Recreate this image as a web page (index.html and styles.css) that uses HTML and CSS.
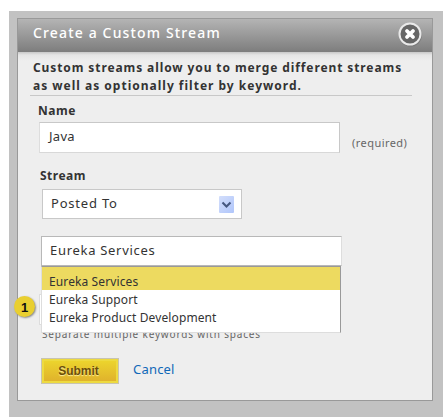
FILE: index.html
```html
<!DOCTYPE html>
<html lang="en">
<head>
<meta charset="utf-8">
<title>Create a Custom Stream</title>
<link rel="stylesheet" href="styles.css">
</head>
<body>
<div class="frame">
  <section class="dialog">
    <header class="header">
      <h1 class="title">Create a Custom Stream</h1>
      <svg class="close" width="28" height="28" viewBox="0 0 28 28" role="img" aria-label="Close">
        <circle class="close-shadow" cx="14.6" cy="15" r="11.5"/>
        <circle class="close-ring" cx="14" cy="14" r="10.5"/>
        <path class="close-x" d="M11 11l6 6M17 11l-6 6"/>
      </svg>
    </header>
    <form class="content">
      <p class="intro"><span class="intro-a">Custom streams allow you to merge different streams</span><br><span class="intro-b">as well as optionally filter by keyword.</span></p>
      <div class="label label-name">Name</div>
      <div class="name-row">
        <div class="box name-box"><span>Java</span></div>
        <span class="required">(required)</span>
      </div>
      <div class="label label-stream">Stream</div>
      <div class="box select"><span>Posted To</span>
        <svg class="arrow" width="15" height="17" viewBox="0 0 15 17">
          <defs><linearGradient id="blue" x1="0" y1="0" x2="1" y2="1"><stop offset="0" stop-color="#d3defb"/><stop offset="1" stop-color="#b0c6fb"/></linearGradient></defs>
          <rect width="15" height="17" rx="1" fill="url(#blue)"/>
          <path d="M3.5 6.5l4 4 4-4" fill="none" stroke="#465880" stroke-width="2.1"/>
        </svg>
      </div>
      <div class="combo">
        <div class="box combo-box"><span>Eureka Services</span></div>
        <ul class="menu">
          <li class="option selected"><span class="o1">Eureka Services</span></li>
          <li class="option"><span class="o2">Eureka Support</span></li>
          <li class="option"><span class="o3">Eureka Product Development</span></li>
        </ul>
        <span class="badge">1</span>
      </div>
      <div class="keyword-box"></div>
      <div class="hint">Separate multiple keywords with spaces</div>
      <div class="actions">
        <button class="submit" type="button">Submit</button>
        <a class="cancel">Cancel</a>
      </div>
    </form>
  </section>
</div>
</body>
</html>
```
FILE: styles.css
```css
* { box-sizing: border-box; }
body { margin: 0; background: #fff; color: #333; font-family: "Noto Sans", "Open Sans", sans-serif; white-space: nowrap; }
.frame { width: 434px; height: 406px; margin: 11px 0 0 9px; padding: 7px 10px 15px 8px; background: #c2c2c2; }
.dialog { height: 383px; border: 1px solid #999; background: #eee; }
.header { display: flex; justify-content: space-between; height: 33px; padding: 0 8px 0 15px; background: linear-gradient(#b4b4b4, #7d7d7d); }
.title { margin: 0; color: #fff; font-size: 14px; line-height: 28px; font-weight: 500; letter-spacing: 1.15px; }
.close { margin-top: 1px; }
.close-shadow { fill: #666; opacity: .45; }
.close-ring { fill: #666; stroke: #e9e9e9; stroke-width: 2; }
.close-x { fill: none; stroke: #fff; stroke-width: 3.8; stroke-linecap: round; }
.content { height: 348px; padding: 7px 20px 0 12px; background: linear-gradient(#c8c8c8, #e5e5e5 3px, #eee 9px); }
.intro { height: 37px; margin: 0; padding-left: 3px; border-bottom: 1px solid #c8c8c8; font-size: 12px; line-height: 18px; font-weight: 700; }
.intro-a { letter-spacing: .9px; }
.intro-b { letter-spacing: 1px; }
.label { font-size: 12px; line-height: 18px; font-weight: 700; letter-spacing: .5px; }
.label-name { margin: 6px 0 2px 8px; }
.name-row { display: flex; margin-left: 9px; }
.box { background: #fff; border: 1px solid #c8c8c8; font-size: 13px; }
.name-box { width: 301px; height: 31px; padding-left: 9px; line-height: 27px; letter-spacing: .3px; border-left-color: #ddd; border-bottom-color: #d8d8d8; }
.required { margin: 12px 0 0 12px; font-size: 11px; line-height: 18px; letter-spacing: .45px; color: #666; }
.label-stream { margin: 14px 0 4px 10px; }
.select { display: flex; justify-content: space-between; width: 200px; height: 30px; margin-left: 12px; padding: 0 7px 0 8px; line-height: 26px; letter-spacing: .8px; }
.arrow { margin-top: 6px; }
.combo { position: relative; width: 301px; margin: 17px 0 0 11px; }
.combo-box { height: 30px; padding-left: 8px; line-height: 27px; letter-spacing: .7px; border-color: #b8b8b8 #ddd #b8b8b8 #b8b8b8; }
.menu { position: absolute; left: 0; top: 30px; width: 300px; height: 67px; margin: 0; padding: 0; list-style: none; background: #fff; border: 1px solid #999; border-left-color: #ddd; border-bottom-color: #ddd; }
.option { height: 18px; padding-left: 7px; font-size: 12px; line-height: 20px; letter-spacing: .11px; }
.selected { height: 23px; padding-top: 5px; background: #edda60; }
.badge { position: absolute; left: -27px; top: 60px; width: 21px; height: 21px; border-radius: 50%; background: #e9cf30; box-shadow: 1px 1px 2px #888; color: #111; font: 700 13px/23px "Liberation Sans", sans-serif; text-align: center; }
.keyword-box { width: 301px; height: 31px; margin: 28px 0 0 9px; border: 1px solid #ddd; background: #fff; }
.hint { margin: 0 0 0 12px; height: 18px; font-size: 10px; line-height: 19px; letter-spacing: .83px; color: #666; }
.actions { display: flex; margin: 15px 0 0 11px; }
.submit { width: 78px; height: 26px; padding: 0; border: 1px solid #c8c4b0; background: linear-gradient(#edd72d, #dfaf2c); box-shadow: inset 0 0 0 2px #edda40; color: #6b4e0a; font: 700 12px/24px "Liberation Sans", sans-serif; text-indent: -3px; text-shadow: 0 1px 1px #fff2a0; }
.cancel { margin-left: 14px; color: #1068b8; font-size: 13px; line-height: 23px; letter-spacing: .2px; }
```
